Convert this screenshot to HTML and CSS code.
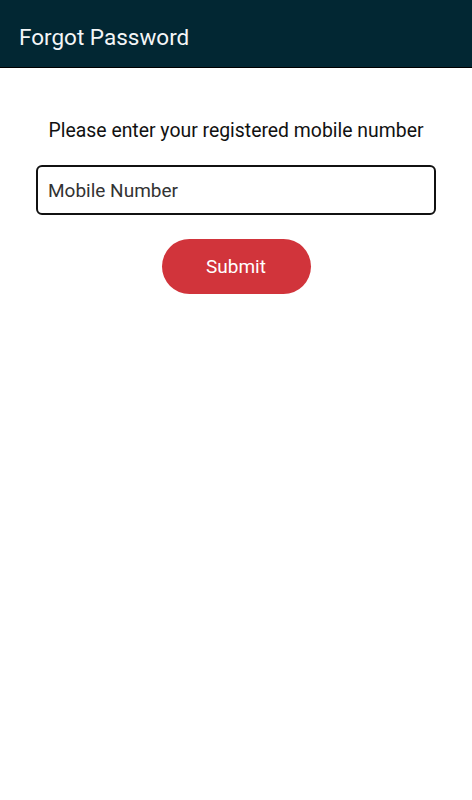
FILE: index.html
```html
<!DOCTYPE html>
<html lang="en">
<head>
  <meta charset="UTF-8" />
  <meta name="viewport" content="width=device-width, initial-scale=1.0"/>
  <title>Forgot Password</title>
  <link rel="stylesheet" href="styles.css">
</head>
<body>
  <header class="app-bar">
    <h1>Forgot Password</h1>
  </header>

  <main class="content">
    <p class="intro">Please enter your registered mobile number</p>
    <form class="reset-form">
      <input type="tel" class="field" placeholder="Mobile Number" />
      <button type="submit" class="submit-btn">Submit</button>
    </form>
  </main>
</body>
</html>
```

FILE: styles.css
```css
/* Colores de la pantalla */
:root {
  --bar-color: #022733;
  --accent: #d1343b;
  --text-color: #111;
  --font-family: Roboto, "Noto Sans", sans-serif;
}

body {
  margin: 0;
  font-family: var(--font-family);
  background: #fff;
  color: var(--text-color);
}

.app-bar {
  height: 68px;
  background: var(--bar-color);
  border-bottom: 1px solid #000;
  display: flex;
  align-items: center;
  padding: 6px 19px 0;
  box-sizing: border-box;
}

.app-bar h1 {
  margin: 0;
  color: #f4f6f7;
  font-size: 22.5px;
  font-weight: 400;
}

.content {
  padding: 0 36px;
}

.intro {
  margin: 51px 0 23px;
  text-align: center;
  font-size: 19.4px;
  font-weight: 400;
}

.reset-form {
  display: flex;
  flex-direction: column;
  align-items: center;
}

.field {
  width: 100%;
  height: 50px;
  box-sizing: border-box;
  border: 2px solid #111;
  border-radius: 6px;
  padding: 0 10px;
  font-family: var(--font-family);
  font-size: 19px;
  color: #222;
  outline: none;
}

.field::placeholder {
  color: #333;
}

.submit-btn {
  margin-top: 24px;
  width: 149px;
  height: 55px;
  border: none;
  border-radius: 28px;
  background: var(--accent);
  color: #fff;
  font-family: var(--font-family);
  font-size: 19px;
  cursor: pointer;
}
```
